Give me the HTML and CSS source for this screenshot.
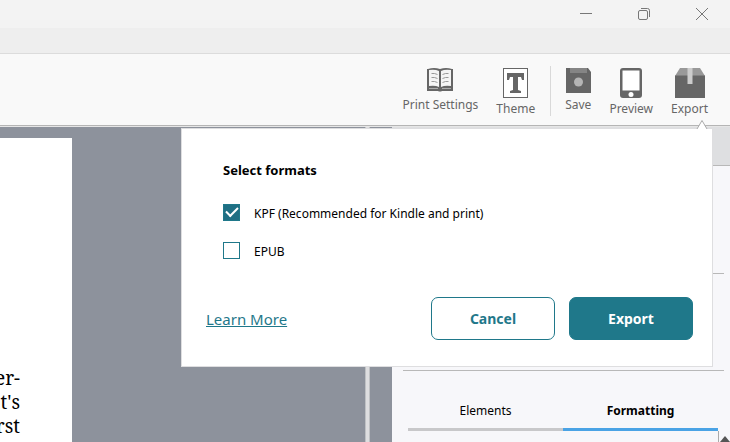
FILE: index.html
```html
<!DOCTYPE html>
<html lang="en">
<head>
<meta charset="utf-8">
<title>Export</title>
<link rel="stylesheet" href="styles.css">
</head>
<body>
<div class="app">
  <header class="titlebar">
    <button class="win" aria-label="Minimize"><svg width="14" height="14" viewBox="0 0 14 14"><path d="M1 6.500h12"/></svg></button>
    <button class="win" aria-label="Restore"><svg width="14" height="14" viewBox="0 0 14 14"><rect x="1.500" y="3.500" width="9" height="9" rx="1.500"/><path d="M4 1.500h6.500a2 2 0 0 1 2 2v6.500"/></svg></button>
    <button class="win" aria-label="Close"><svg width="14" height="14" viewBox="0 0 14 14"><path d="M1 1l12 12M13 1L1 13"/></svg></button>
  </header>
  <div class="menubar"></div>
  <nav class="toolbar">
    <div class="group">
      <button class="tool"><svg width="26" height="26" viewBox="0 0 26 26"><path fill="#666" d="M0 1h1q6-2 12 0 6-2 12 0h1v22H15q-2 1-4 0H0z"/><path fill="#f4f4f4" d="M2 2q6-1 10 1v16q-4-2-10-1zM24 2q-6-1-10 1v16q4-2 10-1z"/><path fill="none" stroke="#999" d="M4.500 5.500q3-.5 6 1M4.500 9.500q3-.5 6 1M4.500 13.500q3-.5 6 1M21.500 5.500q-3-.5-6 1M21.500 9.500q-3-.5-6 1M21.500 13.500q-3-.5-6 1"/><path stroke="#aaa" d="M2 20.500h9M15 20.500h9"/></svg><span>Print Settings</span></button>
      <button class="tool"><svg width="25" height="30" viewBox="0 0 25 30"><rect x=".5" y=".5" width="24" height="29" fill="#fff" stroke="#666"/><path fill="#666" d="M4 5h17v7h-2l-1-3h-3v13l3 1v2H7v-2l3-1V9H7l-1 3H4z"/></svg><span>Theme</span></button>
    </div>
    <div class="group">
      <button class="tool"><svg width="25" height="26" viewBox="0 0 25 26"><path fill="#666" d="M0 0h22l3 4v21H0z"/><path fill="#858585" d="M4 0h17v5H4z"/><circle cx="12.500" cy="14" r="4.500" fill="#b5b5b5"/></svg><span>Save</span></button>
      <button class="tool"><svg width="22" height="30" viewBox="0 0 22 30"><rect width="22" height="30" rx="3" fill="#666"/><path fill="#fff" d="M2.500 2.500h17v20h-17z"/><circle cx="11" cy="26.500" r="2.500" fill="#fff"/></svg><span>Preview</span></button>
      <button class="tool"><svg width="30" height="30" viewBox="0 0 30 30"><path fill="#999" d="M5 0h20l5 8H0z"/><path fill="#666" d="M0 7.500h30V30H0z"/><path fill="#ccc" d="M12.500 0h5v16h-5z"/></svg><span>Export</span></button>
    </div>
  </nav>
  <main class="workspace">
    <section class="canvas">
      <div class="page"><p>er-</p><p>t's</p><p>rst</p></div>
    </section>
    <div class="splitter"></div>
    <aside class="panel">
      <div class="panel-head"></div>
      <div class="section first"></div>
      <div class="section second"></div>
      <div class="tabs">
        <button class="tab">Elements</button>
        <button class="tab active">Formatting</button>
      </div>
      <div class="scroll"><svg width="10" height="6" viewBox="0 0 10 6"><path fill="#555" d="M5 0l5 6H0z"/></svg></div>
    </aside>
    <form class="dialog" role="dialog" aria-labelledby="title">
      <svg class="arrow" width="12" height="9" viewBox="0 0 12 9"><path fill="#fff" stroke="#aaa" d="M1 9l5-8.500L11 9"/></svg>
      <h1 id="title">Select formats</h1>
      <label class="option"><input type="checkbox" checked><span>KPF (Recommended for Kindle and print)</span></label>
      <label class="option"><input type="checkbox"><span>EPUB</span></label>
      <div class="actions">
        <a href="#">Learn More</a>
        <button type="button" class="btn">Cancel</button>
        <button type="button" class="btn primary">Export</button>
      </div>
    </form>
  </main>
</div>
</body>
</html>
```

FILE: styles.css
```css
* { box-sizing: border-box; }
body { margin: 0; font: 12px/20px "Noto Sans", "DejaVu Sans", sans-serif; color: #000; }
button { border: 0; padding: 0; background: none; font: inherit; color: inherit; }
svg { display: block; }
p, h1 { margin: 0; }
.app { display: flex; flex-direction: column; height: 100vh; overflow: hidden; }
.titlebar { display: flex; justify-content: flex-end; gap: 2px; height: 28px; flex: none; background: #f3f3f3; }
.win { width: 56px; display: flex; align-items: center; justify-content: center; }
.win svg { fill: none; stroke: #777; }
.menubar { height: 26px; flex: none; background: #eee; border-bottom: 1px solid #dcdcdc; }
.toolbar { display: flex; justify-content: flex-end; flex: none; height: 72px; padding: 12px 22px 0 0; background: #f9f9f9; border-bottom: 1px solid #b5b5b5; }
.group { display: flex; gap: 18px; height: 50px; }
.group + .group { margin-left: 15px; padding-left: 14px; border-left: 1px solid #d9d9d9; }
.tool { display: flex; flex-direction: column; align-items: center; padding-top: 2px; line-height: 22px; color: #666; white-space: nowrap; height: max-content; }
.workspace { position: relative; display: flex; flex: 1; min-height: 0; background: #8d929c; border-top: 1px solid #e6e6e6; }
.canvas { flex: 1; display: flex; padding-top: 11px; }
.page { display: flex; flex-direction: column; align-items: flex-end; width: 72px; padding: 228px 52px 0 0; background: #fff; font: 19px/24px "Noto Serif", "DejaVu Serif", serif; }
.splitter { width: 5px; margin-right: 22px; background: #dedee0; border: solid #bfc1c4; border-width: 0 1px; }
.panel { width: 338px; background: #f7f7fa; }
.panel-head { height: 39px; background: #dedfe1; border-bottom: 1px solid #b8b8b8; }
.section { margin: 0 6px 0 11px; border-bottom: 1px solid #b8b8b8; }
.first { height: 108px; }
.second { height: 97px; }
.tabs { display: flex; margin: 20px 12px 0 16px; }
.tab { flex: 1; height: 40px; padding-top: 2px; border-bottom: 3px solid #c8c8ca; }
.active { font-weight: 700; border-color: #4aa3e5; }
.scroll { display: flex; justify-content: flex-end; width: 12px; height: 40px; margin-left: auto; padding-top: 5px; border-left: 1px solid #aaa; }
.dialog { position: absolute; top: 1px; left: 181px; right: 17px; padding: 31px 19px 26px 24px; background: #fff; border: 1px solid #dedee0; }
.arrow { position: absolute; top: -9px; right: 4px; }
.dialog h1 { margin: 0 0 24px 17px; font-size: 13px; line-height: 20px; }
.option { display: flex; align-items: flex-start; gap: 14px; margin: 0 0 20px 17px; height: 18px; }
.option input { appearance: none; display: grid; place-items: center; width: 17px; height: 17px; margin: 0; border: 1px solid #1f788a; background: #fff; }
.option input:checked { background: #1f6f84; }
.option input:checked::after { content: ""; width: 10px; height: 5px; margin-bottom: 4px; border: solid #fff; border-width: 0 0 2px 2px; transform: rotate(-45deg); }
.actions { display: flex; align-items: center; gap: 14px; margin-top: 37px; }
.actions a { margin-right: auto; color: #1f788a; font-size: 15px; }
.btn { width: 124px; height: 43px; border: 1px solid #1f788a; border-radius: 7px; color: #1f788a; font-size: 14px; font-weight: 700; }
.primary { background: #1f788a; color: #fff; }
```
